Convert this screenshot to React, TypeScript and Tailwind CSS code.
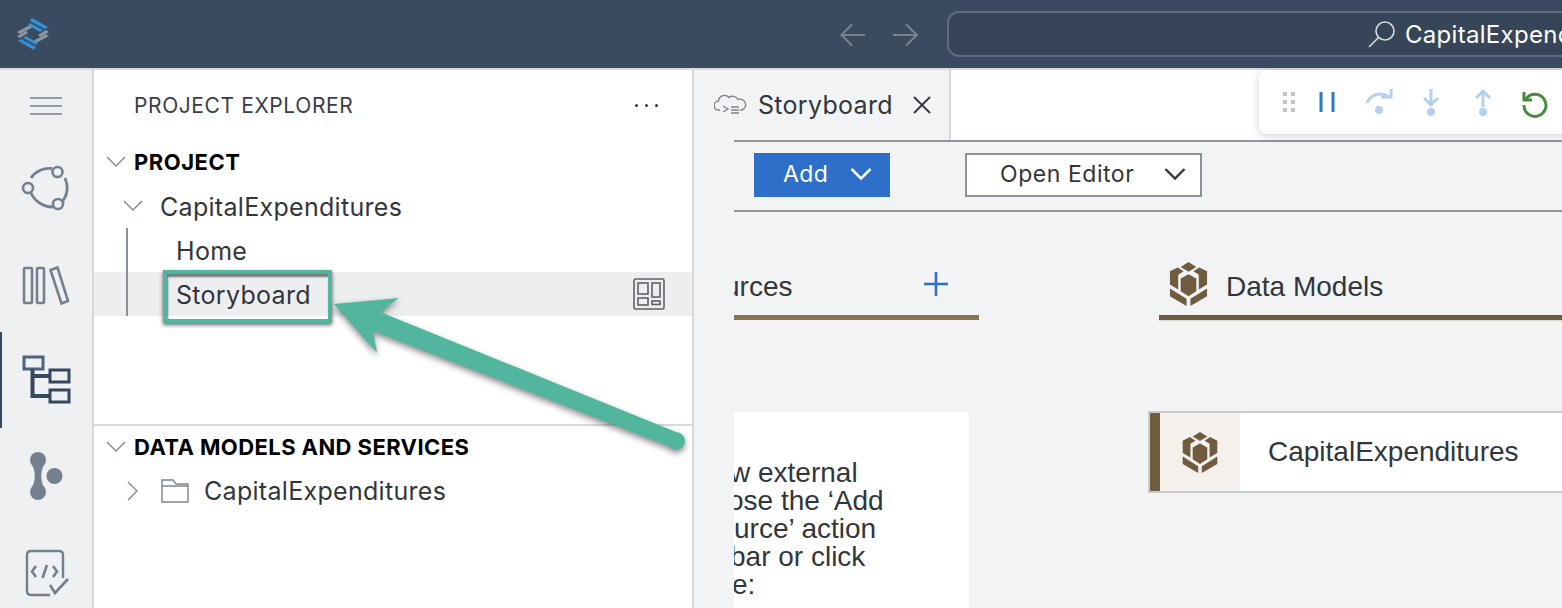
import React from "react";

const Cube = ({ className, fill }: { className: string; fill: string }) => (
  <svg viewBox="0 0 38 45" className={className} fill={fill}>
    <polygon points="19,0 27,5 19,10 11,5" />
    <polygon points="0,9.5 8,5.5 14,9.5 8.5,13 8.5,28 0,23" />
    <polygon points="38,9.5 30,5.5 24,9.5 29.5,13 29.5,28 38,23" />
    <polygon points="19,12.5 27,17 27,30 19,35 11,30 11,17" />
    <polygon points="0,27 17,37.5 17,45 0,35" />
    <polygon points="38,27 21,37.5 21,45 38,35" />
  </svg>
);

const Chev = ({ className, d }: { className: string; d: string }) => (
  <svg viewBox="0 0 20 20" className={className} fill="none" stroke="#7b8592" strokeWidth="1.3">
    <path d={d} />
  </svg>
);

const DOWN = "M1 5 L10 14 L19 5";
const RIGHT = "M5 1 L14 10 L5 19";

const Rail = () => (
  <aside className="w-[94px] shrink-0 bg-[#eef0f2] border-r-2 border-[#d6d7d9] flex flex-col relative">
    <svg viewBox="0 0 92 538" className="w-[92px] h-[538px] shrink-0" fill="none" stroke="#75808f" strokeWidth="2.6">
      <path d="M30 28 H62 M30 36 H62 M30 44 H62" strokeWidth="1.6" />
      <circle cx="57.5" cy="102" r="5" />
      <circle cx="28" cy="118" r="5" />
      <circle cx="58" cy="134" r="5" />
      <path d="M31 108 A22 22 0 0 1 52 98.5 M65 108 A24 24 0 0 1 63 131 M31 123 A24 24 0 0 0 53 137" strokeWidth="2.8" />
      <rect x="24" y="198" width="8" height="35" rx="1" />
      <rect x="37" y="198" width="7" height="35" rx="1" />
      <path d="M50.5 200 L57.5 197.5 L68 231 L61.5 233.5 Z" />
      <g stroke="#36495f" strokeWidth="3">
        <rect x="24" y="287" width="19" height="12" stroke="#4f627a" />
        <rect x="50" y="300" width="19" height="12" />
        <rect x="50" y="320" width="19" height="12" />
        <path d="M32.5 299 V326 H50 M32.5 306 H50" strokeWidth="4" />
      </g>
      <g fill="#75808f" stroke="none">
        <circle cx="38" cy="390" r="8" />
        <circle cx="38" cy="422" r="8" />
        <circle cx="54.5" cy="406" r="8" />
        <path d="M31 393 C36 401 36 411 31 419 H45 C40 411 40 401 45 393 Z" />
      </g>
      <path d="M50 525 H31 Q27 525 27 521 V485 Q27 481 31 481 H59 Q63 481 63 485 V508" strokeWidth="2.4" />
      <path d="M36 496 L32 501.5 L36 507 M47 495 L42.5 508 M53 496 L57 501.5 L53 507" strokeWidth="2.6" />
      <path d="M50 515 L55 523 L68 509" strokeWidth="2.6" />
    </svg>
    <div className="absolute left-0 top-[262px] w-[2px] h-[96px] bg-[#36495f]" />
  </aside>
);

const Explorer = () => (
  <section className="w-[600px] shrink-0 bg-white border-r-2 border-[#d6d7d9] flex flex-col text-[#32363b] font-['Inter',sans-serif]">
    <div className="h-[356px] flex flex-col border-b-2 border-[#d9dadb]">
      <div className="h-[71px] pl-[40px] pr-[34px] flex items-center justify-between">
        <span className="text-[21px] tracking-[0.6px] text-[#3a3e44]">PROJECT EXPLORER</span>
        <div className="flex gap-[7px]">
          <span className="w-[3px] h-[3px] rounded-full bg-[#32363b]" />
          <span className="w-[3px] h-[3px] rounded-full bg-[#32363b]" />
          <span className="w-[3px] h-[3px] rounded-full bg-[#32363b]" />
        </div>
      </div>
      <div className="h-[44px] flex items-center pl-[12px] -mt-[1px]">
        <Chev className="w-[20px] h-[20px] shrink-0" d={DOWN} />
        <span className="ml-[8px] text-[22px] font-bold tracking-[0.5px] text-black">PROJECT</span>
      </div>
      <div className="h-[44px] flex items-center pl-[29px]">
        <Chev className="w-[20px] h-[20px] shrink-0" d={DOWN} />
        <span className="ml-[17px] pt-[3px] text-[25px] tracking-[0.3px]">CapitalExpenditures</span>
      </div>
      <div className="h-[44px] flex items-center pl-[82px] pt-[3px] text-[25px] tracking-[0.3px] relative">
        <span className="absolute left-[32px] top-0 bottom-0 w-[2px] bg-[#8a929c]" />
        Home
      </div>
      <div className="h-[44px] flex items-center justify-between pl-[82px] pr-[27px] text-[25px] tracking-[0.3px] bg-[#edeef0] relative">
        <span className="absolute left-[32px] top-0 bottom-0 w-[2px] bg-[#8a929c]" />
        <span className="pt-[3px]">Storyboard</span>
        <svg viewBox="0 0 32 32" className="w-[32px] h-[32px] shrink-0" fill="none" stroke="#5f6165" strokeWidth="1.6">
          <rect x="1" y="1" width="30" height="30" rx="1.5" />
          <rect x="5" y="5" width="10" height="11" />
          <rect x="19" y="5" width="8" height="14" />
          <rect x="5" y="20" width="10" height="7" />
          <rect x="19" y="23" width="8" height="3.5" />
        </svg>
      </div>
    </div>
    <div className="h-[44px] flex items-center pl-[12px] -mt-[1px]">
      <Chev className="w-[20px] h-[20px] shrink-0" d={DOWN} />
      <span className="ml-[8px] text-[22px] font-bold tracking-[0.42px] text-black whitespace-nowrap">DATA MODELS AND SERVICES</span>
    </div>
    <div className="h-[44px] flex items-center pl-[29px]">
      <Chev className="w-[20px] h-[20px] shrink-0" d={RIGHT} />
      <svg viewBox="0 0 28 24" className="w-[28px] h-[24px] ml-[18px] shrink-0" fill="none" stroke="#7b8592" strokeWidth="1.4">
        <path d="M1 23 V1 H12 L15 5 H27 V23 Z M1 7 H27" />
      </svg>
      <span className="ml-[15px] pt-[2px] text-[25px] tracking-[0.3px]">CapitalExpenditures</span>
    </div>
  </section>
);

const Main = () => (
  <main className="flex-1 min-w-0 bg-[#f2f3f5] flex flex-col overflow-hidden">
    <div className="h-[70px] shrink-0 bg-white flex">
      <div className="w-[257px] bg-[#f2f3f5] border-r-2 border-[#d6d7d9] flex items-center pl-[20px] font-['Inter',sans-serif]">
        <svg viewBox="0 0 34 24" className="w-[34px] h-[24px] shrink-0" fill="none" stroke="#7f858c" strokeWidth="1.4">
          <path d="M6 17 H5 A4.5 4.5 0 0 1 4.5 8 A6 6 0 0 1 15 4.5 A6 6 0 0 1 24 6.5 A5.5 5.5 0 0 1 28 17 H26" />
          <path d="M9 13 L14 16 L9 19 M17 14 H25 M17 17 H25 M17 20 H25" />
        </svg>
        <span className="ml-[10px] pt-[2px] text-[25px] tracking-[0.3px] text-[#32363b]">Storyboard</span>
        <svg viewBox="0 0 18 18" className="w-[18px] h-[18px] ml-[20px] shrink-0" fill="none" stroke="#32363b" strokeWidth="1.8">
          <path d="M1 1 L17 17 M17 1 L1 17" />
        </svg>
      </div>
    </div>
    <div className="ml-[40px] h-[72px] shrink-0 border-t-2 border-b-2 border-[#8f959d] flex items-center pl-[20px] pb-[2px] font-['Inter',sans-serif]">
      <div className="w-[136px] h-[44px] bg-[#2d6fc9] text-white text-[23px] tracking-[0.4px] flex items-center pl-[29px] pb-[2px]">
        Add
        <svg viewBox="0 0 22 14" className="w-[22px] h-[14px] ml-[22px] shrink-0" fill="none" stroke="white" strokeWidth="2.6">
          <path d="M1.5 2 L11 11.5 L20.5 2" />
        </svg>
      </div>
      <div className="ml-[75px] w-[237px] h-[44px] bg-white border-2 border-[#8a929c] text-[#32363b] text-[23px] tracking-[0.55px] flex items-center pl-[33px] pb-[2px]">
        Open Editor
        <svg viewBox="0 0 22 14" className="w-[22px] h-[14px] ml-[30px] shrink-0" fill="none" stroke="#32363b" strokeWidth="2.4">
          <path d="M1.5 2 L11 11.5 L20.5 2" />
        </svg>
      </div>
    </div>
    <div className="ml-[40px] flex-1 flex font-['Liberation_Sans',sans-serif] text-[#32363b]">
      <div className="w-[245px] shrink-0 flex flex-col overflow-hidden">
        <div className="h-[103px] flex items-end justify-between pr-[30px] pb-[11px]">
          <span className="-ml-[10px] text-[28px] leading-[34px]">urces</span>
          <svg viewBox="0 0 26 26" className="w-[26px] h-[26px] mb-[7px] shrink-0" fill="none" stroke="#2d6fc9" strokeWidth="2.6">
            <path d="M13 1 V25 M1 13 H25" />
          </svg>
        </div>
        <div className="h-[5px] bg-[#8a7350]" />
        <div className="mt-[92px] w-[235px] flex-1 bg-white pt-[47px] text-[28px] leading-[28px] whitespace-nowrap overflow-hidden">
          <p className="-ml-[4px]">w external</p>
          <p className="-ml-[6px]">ose the ‘Add</p>
          <p>urce’ action</p>
          <p className="-ml-[4px]">bar or click</p>
          <p className="-ml-[2px]">e:</p>
        </div>
      </div>
      <div className="ml-[180px] flex-1 flex flex-col">
        <div className="h-[103px] flex items-end pl-[10px] pb-[9px]">
          <Cube className="w-[39px] h-[44px] shrink-0" fill="#6f5b3e" />
          <span className="ml-[18px] text-[28px] leading-[34px] mb-[2px] whitespace-nowrap">Data Models</span>
        </div>
        <div className="h-[5px] bg-[#6f5b3e] shadow-[0_1px_1px_rgba(0,0,0,0.1)]" />
        <div className="mt-[91px] -ml-[11px] h-[82px] bg-white border-2 border-[#c9c9c9] border-r-0 flex items-stretch">
          <div className="w-[10px] bg-[#6f5b3e]" />
          <div className="w-[80px] bg-[#f4f1ec] flex items-center justify-center">
            <Cube className="w-[36px] h-[41px] shrink-0" fill="#6f5b3e" />
          </div>
          <span className="ml-[28px] text-[28px] self-center whitespace-nowrap">CapitalExpenditures</span>
        </div>
      </div>
    </div>
  </main>
);

const Debug = () => (
  <div className="absolute left-[1259px] top-[70px] w-[320px] h-[64px] bg-white rounded-l-lg shadow-[0_2px_10px_rgba(0,0,0,0.18)]">
    <svg viewBox="0 0 303 64" className="w-[303px] h-[64px]" fill="none">
      <g fill="#c4c5c7">
        <rect x="24" y="22" width="4" height="4" />
        <rect x="32" y="22" width="4" height="4" />
        <rect x="24" y="30" width="4" height="4" />
        <rect x="32" y="30" width="4" height="4" />
        <rect x="24" y="38" width="4" height="4" />
        <rect x="32" y="38" width="4" height="4" />
      </g>
      <path d="M62 22 V42 M74 22 V42" stroke="#2d78c8" strokeWidth="3" />
      <g stroke="#b5d1ee" strokeWidth="3" fill="none">
        <path d="M108 33 A14 13 0 0 1 130 27" />
        <path d="M122 27 H132 V19" />
        <path d="M172 19 V36 M165 28 L172 35 L179 28" />
        <path d="M224 37 V20 M217 28 L224 21 L231 28" />
      </g>
      <g fill="#b5d1ee">
        <circle cx="120" cy="40" r="4" />
        <circle cx="172" cy="42" r="4" />
        <circle cx="224" cy="42" r="4" />
      </g>
      <g stroke="#4a8a3c" strokeWidth="3" fill="none">
        <path d="M267 29 A11 11 0 1 1 265 35" />
        <path d="M265 22 V30 H273" />
      </g>
    </svg>
  </div>
);

export default function App() {
  return (
    <div className="relative w-[1562px] h-[608px] overflow-hidden bg-white flex flex-col">
      <header className="h-[70px] shrink-0 bg-[#3a4b60] border-b-2 border-[#d8d9da] flex items-center relative font-['Inter',sans-serif]">
        <svg viewBox="0 0 34 34" className="w-[34px] h-[34px] ml-[16px] shrink-0">
          <g fill="#8b97a6">
            <polygon points="1,15 14,8 17,10 4,17" />
            <polygon points="1,19 10,14 12,16 4,21" />
            <polygon points="33,19 20,26 17,24 30,17" />
            <polygon points="33,15 24,20 22,18 30,13" />
          </g>
          <g fill="#3690d6">
            <polygon points="16,1 32,10 29,12 14,4" />
            <polygon points="14,6 27,13 24,15 12,8" />
            <polygon points="18,33 2,24 5,22 20,30" />
            <polygon points="20,28 7,21 10,19 22,26" />
          </g>
        </svg>
        <svg viewBox="0 0 80 24" className="w-[80px] h-[24px] ml-[790px] mt-[2px] shrink-0" fill="none" stroke="#77838f" strokeWidth="2">
          <path d="M25 12 H1.5 M12 1.5 L1.5 12 L12 22.5" />
          <path d="M53 12 H77 M66 1.5 L77 12 L66 22.5" />
        </svg>
        <div className="ml-[27px] w-[800px] h-[46px] shrink-0 rounded-xl border-2 border-[#5d6c7e] bg-[#364658] flex items-center pl-[419px]">
          <svg viewBox="0 0 28 28" className="w-[28px] h-[28px] shrink-0" fill="none" stroke="#d8dbdf" strokeWidth="1.6">
            <circle cx="17" cy="11" r="9" />
            <path d="M10.5 17.5 L1 27" />
          </svg>
          <span className="ml-[9px] pt-[2px] text-white text-[24px] tracking-[0.3px] whitespace-nowrap">CapitalExpenditures</span>
        </div>
      </header>
      <div className="flex flex-1 min-h-0">
        <Rail />
        <Explorer />
        <Main />
      </div>
      <Debug />
      <div className="absolute left-[163px] top-[270px] w-[169px] h-[53px] border-4 border-[#52b69f] shadow-[0_2px_4px_rgba(0,0,0,0.6),inset_1px_3px_2px_rgba(0,0,0,0.5)]" />
      <svg viewBox="0 0 1562 608" className="absolute inset-0 w-[1562px] h-[608px] pointer-events-none drop-shadow-[0_3px_3px_rgba(0,0,0,0.45)]">
        <polygon points="334,304 399,298 380,312 676,432 678,450 373,331 377,353" fill="#52b69f" />
        <circle cx="676" cy="441" r="9" fill="#52b69f" />
      </svg>
    </div>
  );
}
